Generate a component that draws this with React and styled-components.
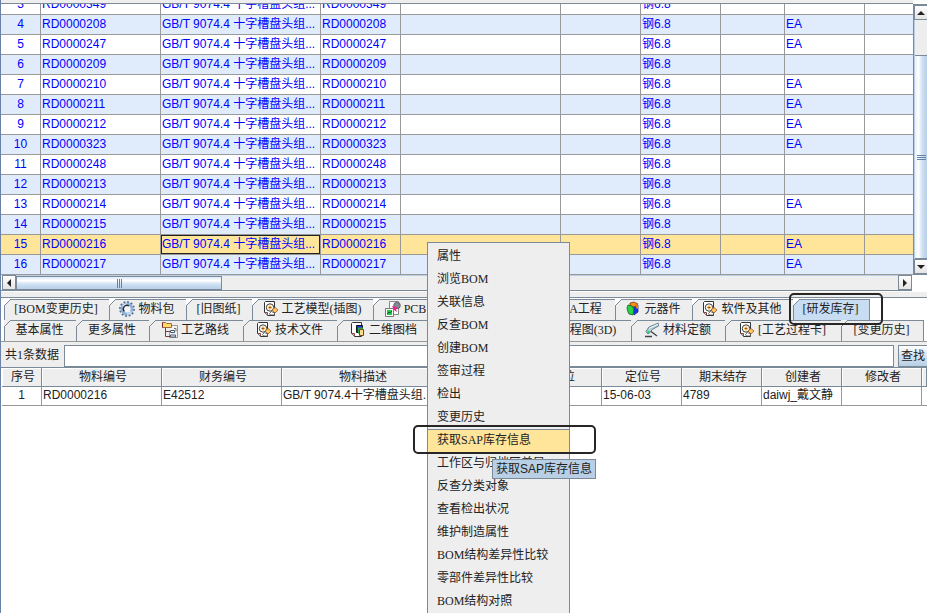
import React from "react";
import styled, { createGlobalStyle } from "styled-components";

const line = "#7a8a99";
const grid = "#999";
const panel = "#eee";
const sans = `"Liberation Sans", "Noto Sans CJK SC", sans-serif`;
const serif = `"Liberation Serif", "Noto Sans CJK SC", serif`;

const GlobalStyle = createGlobalStyle`
  * {
    box-sizing: border-box;
  }
  body {
    margin: 0;
    overflow: hidden;
    background: #fff;
    color: #222;
    font: 12px/18px ${serif};
  }
  button, input {
    margin: 0;
    font: inherit;
    color: inherit;
  }
`;

const Window = styled.main`
  position: relative;
  display: flex;
  flex-direction: column;
  min-height: 100vh;
  overflow: hidden;
  border-left: 1px solid #6b82a8;
`;

const TopPane = styled.section`
  display: flex;
  height: 275px;
`;

const TableArea = styled.div`
  flex: 1;
  display: flex;
  flex-direction: column;
  min-width: 0;
`;

const HeaderEdge = styled.div`
  flex: none;
  height: 4px;
  background: ${panel};
  border-bottom: 1px solid ${line};
`;

const Viewport = styled.div`
  flex: 1;
  display: flex;
  flex-direction: column;
  justify-content: flex-end;
  min-height: 0;
  overflow: hidden;
`;

const Table = styled.table`
  width: 100%;
  table-layout: fixed;
  border-collapse: separate;
  border-spacing: 0;
  font-family: ${sans};
`;

const Col = styled.col`
  width: ${props => (props.$w ? `${props.$w}px` : "auto")};
`;

const PartRow = styled.tr`
  height: 20px;
  color: #00f;
  background: ${props =>
    props.$selected ? "#ffe599" : props.$even ? "#e0ebfc" : "#fff"};
`;

const Cell = styled.td`
  padding: 0 1px 2px;
  line-height: 16px;
  overflow: hidden;
  white-space: nowrap;
  border-right: 1px solid ${grid};
  border-bottom: 1px solid ${grid};
  text-align: ${props => (props.$center ? "center" : "left")};
  box-shadow: ${props => (props.$focus ? "inset 0 0 0 1px #222" : "none")};
  &:last-child {
    border-right: 0;
  }
`;

const HeadCell = styled.th`
  height: 19px;
  padding: 0 0 0 3px;
  font-weight: normal;
  line-height: 16px;
  white-space: nowrap;
  background: ${panel};
  border-right: 1px solid ${line};
  border-bottom: 1px solid ${line};
  box-shadow: inset 1px 1px #fff;
`;

const VerticalBar = styled.div`
  flex: none;
  display: flex;
  flex-direction: column;
  width: 14px;
  margin-top: 4px;
  border: solid ${line};
  border-width: 1px 0 1px 1px;
`;

const ArrowButton = styled.button`
  flex: none;
  display: flex;
  align-items: center;
  justify-content: center;
  width: 14px;
  height: 15px;
  padding: 0;
  border: 1px solid ${line};
  background: linear-gradient(#fff, #e4e4e4);
`;

const VerticalTrack = styled.div`
  flex: 1;
  padding-top: 35px;
  background: ${panel};
  border-left: 1px solid #b8cfe5;
`;

const VerticalThumb = styled.div`
  display: flex;
  align-items: center;
  justify-content: center;
  height: 100%;
  border: solid ${line};
  border-width: 1px 0;
  background: linear-gradient(90deg, #e8f1fb, #fff 30%, #cfe0f3 60%, #b8cfe5);
`;

const HorizontalBar = styled.div`
  flex: none;
  display: flex;
  height: 16px;
  margin-right: 15px;
  padding-left: 1px;
  border-bottom: 1px solid ${line};
`;

const HorizontalTrack = styled.div`
  flex: 1;
  background: ${panel};
  border-top: 1px solid #b8cfe5;
`;

const HorizontalThumb = styled.div`
  display: flex;
  align-items: center;
  justify-content: center;
  width: 206px;
  height: 100%;
  border: 1px solid ${line};
  background: linear-gradient(#dbe9f8, #fff 30%, #cfe0f3 60%, #b8cfe5);
`;

const Divider = styled.div`
  flex: none;
  height: 6px;
  margin-top: 1px;
  background: ${panel};
  border-bottom: 1px solid ${line};
`;

const TabArea = styled.nav`
  flex: none;
  padding: 1px 3px 0;
  border-bottom: 1px solid ${grid};
`;

const TabRow = styled.div`
  display: flex;
  height: 21px;
  background: ${props => (props.$inner ? panel : "#fff")};
`;

const TabButton = styled.button`
  position: relative;
  flex: none;
  display: flex;
  align-items: center;
  justify-content: center;
  gap: 3px;
  width: ${props => props.$w}px;
  padding: 0 2px 2px 0;
  white-space: nowrap;
  background: ${props => (props.$selected ? "#c8ddf2" : panel)};
  border: solid ${line};
  border-width: 1px 1px 0 0;
  &:first-child {
    border-left-width: 1px;
  }
  &::before {
    content: "";
    position: absolute;
    top: -1px;
    left: -1px;
    width: 7px;
    height: 7px;
    background: linear-gradient(
      to bottom right,
      ${props => (props.$inner ? panel : "#fff")} 43%,
      ${line} 43% 56%,
      ${props => (props.$selected ? "#c8ddf2" : panel)} 56%
    );
  }
`;

const SearchBar = styled.form`
  flex: none;
  display: flex;
  align-items: stretch;
  height: 25px;
  padding: 3px 0 0 4px;
  background: ${panel};
`;

const SearchLabel = styled.label`
  width: 59px;
  line-height: 20px;
`;

const SearchInput = styled.input`
  flex: 1;
  min-width: 0;
  padding: 0 4px;
  background: #fff;
  border: 1px solid ${line};
`;

const SearchButton = styled.button`
  width: 29px;
  margin-left: 4px;
  padding: 0 0 0 2px;
  text-align: left;
  white-space: nowrap;
  border: solid ${line};
  border-width: 1px 0 1px 1px;
  background: linear-gradient(#fff, #dde8f3 40%, #b8cfe5);
`;

const Results = styled.section`
  flex: 1;
  padding-left: 1px;
  border-top: 1px solid ${line};
`;

const ResultRow = styled.tr`
  height: 19px;
`;

const Menu = styled.div`
  position: absolute;
  top: 242px;
  left: 426px;
  display: flex;
  flex-direction: column;
  width: 143px;
  padding: 2px 0;
  background: ${panel};
  border: 1px solid ${line};
`;

const MenuItem = styled.button`
  flex: none;
  height: 23px;
  padding: 0 0 2px 9px;
  text-align: left;
  white-space: nowrap;
  border: solid transparent;
  border-width: 1px 0;
  border-top-color: ${props => (props.$active ? line : "transparent")};
  background: ${props => (props.$active ? "#ffe599" : "transparent")};
`;

const Tooltip = styled.div`
  position: absolute;
  top: 459px;
  left: 491px;
  padding: 0 3px;
  background: #b8cfe5;
  border: 1px solid ${line};
  font-family: ${sans};
`;

const Outline = styled.div`
  position: absolute;
  top: ${props => props.$top}px;
  left: ${props => props.$left}px;
  width: ${props => props.$w}px;
  height: ${props => props.$h}px;
  border: 2px solid #262626;
  border-radius: 5px;
  pointer-events: none;
`;

const Svg = props => (
  <svg width="16" height="16" viewBox="0 0 16 16" aria-hidden="true" {...props} />
);

const GearIcon = () => (
  <Svg fill="none">
    <circle cx="8" cy="8" r="6.7" stroke="#54708f" strokeWidth="2.4" strokeDasharray="1.8 1.7" />
    <circle cx="8" cy="8" r="5" stroke="#8fb1d6" strokeWidth="3" />
    <path d="M3.6 5.500A5 5 0 0 1 8 3" stroke="#d5e6f8" strokeWidth="1.600" />
    <path d="M12.400 10.500A5 5 0 0 1 8 13" stroke="#c9def5" strokeWidth="1.600" />
    <circle cx="8" cy="8" r="3.4" fill="#f4f4f4" />
    <path d="M5.400 10.500A3.600 3.600 0 0 1 10 5" stroke="#222c38" strokeWidth="1.300" />
  </Svg>
);

const RouteIcon = () => (
  <Svg fill="none">
    <path d="M8.500 3.500h7v12h-8v-5" fill="#f2f2f2" stroke="#9a9a9a" />
    <path d="M3.500 6v8.500H8M3.500 9.500H8" stroke="#7d3b3b" />
    <path d="M8.500 8.500h4v2h-4zM8.500 13h5v2h-5z" fill="#fff" stroke="#43586e" />
    <path d="M12 6.500h2v3" stroke="#777" />
    <path d="M.5 5.500v-5h3l1 1h5v4z" fill="#ffdc6c" stroke="#a56a34" />
    <path d="M.5 5.500v-5" stroke="#6e2222" />
  </Svg>
);

const DocIcon = () => (
  <Svg fill="none">
    <path d="M2.500 .5h9v14h-7l-3-3v-10z" fill="#fff" stroke="#333" />
    <path d="M1.500 11.500h3v3" fill="#c9c9c9" stroke="#8a4444" />
    <circle cx="7" cy="6.500" r="3.700" fill="#fff" stroke="#3a3a3a" />
    <path d="M7 4.500v4M5 6.500h4" stroke="#f09a1a" strokeWidth="1.400" />
    <path d="M6.500 6h1v1h-1z" fill="#222" />
    <path d="M9 9l3-2.500 3 2.500-3 3z" fill="#ffc861" stroke="#a0561c" strokeWidth=".8" />
    <path d="M6.500 12.500l2-2 3 1.500v2h-4z" fill="#fff" stroke="#444" strokeWidth=".8" />
  </Svg>
);

const PcbIcon = () => (
  <Svg fill="none">
    <path d="M4.500 .5h9v13h-9z" fill="#fff" stroke="#888" />
    <circle cx="12" cy="4.500" r="3.300" fill="#858b95" stroke="#4c5360" strokeWidth=".8" />
    <path d="M7 5l6 1.500-2 1.500 1 3-3-2z" fill="#ee1f86" />
    <path d="M.5 7.500h8v8h-8z" fill="#fff" stroke="#777" />
    <path d="M2 9h5v5H2z" fill="#1fcb3c" />
    <path d="M2 13l2-2 1 1 2-2" stroke="#064" />
  </Svg>
);

const DrawingIcon = () => (
  <Svg fill="none">
    <path d="M2.500 .5h9v14h-7l-3-3v-10z" fill="#fff" stroke="#333" />
    <path d="M1.500 11.500h3v3" fill="#c9c9c9" stroke="#8a4444" />
    <path d="M6.500 3.500h6v7h-6z" fill="#1d2fe6" stroke="#112" />
    <path d="M8 5.500h5v6H8z" fill="#2fa648" />
    <path d="M9.500 7.500h4v6h-4z" fill="#ffdc8a" stroke="#6b4a20" />
  </Svg>
);

const CubeIcon = () => (
  <Svg>
    <path d="M5 2l4-1 4 2-4 3-4-1z" fill="#ff8b12" stroke="#603010" strokeWidth=".7" />
    <path d="M8 7l5-3v7l-4 3z" fill="#1532e8" stroke="#142060" strokeWidth=".7" />
    <path d="M3 4l4 1 2 3-1 6-4-1-1-2-1-4z" fill="#27d443" stroke="#135c20" strokeWidth=".8" />
    <path d="M10 3l3 1v4l-2-1z" fill="#f47a11" />
  </Svg>
);

const ArmIcon = () => (
  <Svg fill="none">
    <path d="M14.500 1L5 5 2 9.500l2 2.500 3-2.500 1-2L14.500 4z" fill="#b8d0dd" stroke="#667d8c" />
    <path d="M5.500 6l9-4" stroke="#f2f8fc" />
    <path d="M1 14.500h7M7 9.500l6 4.500" stroke="#39454d" strokeWidth="1.400" />
    <circle cx="4.500" cy="10" r="1.300" fill="#2fcf54" />
  </Svg>
);

const Arrow = ({ d }) => (
  <svg width="8" height="8" viewBox="0 0 8 8" aria-hidden="true">
    <path d={d} fill="#222" />
  </svg>
);

const Grip = ({ vertical }) => (
  <svg
    width={vertical ? 9 : 7}
    height={vertical ? 7 : 9}
    viewBox={vertical ? "0 0 9 7" : "0 0 7 9"}
    aria-hidden="true"
  >
    <path
      d={vertical ? "M0 1.500h9M0 3.500h9M0 5.500h9" : "M1.500 0v9M3.500 0v9M5.500 0v9"}
      stroke="#6382a8"
    />
  </svg>
);

const parts = [
  [3, "RD0000349", ""],
  [4, "RD0000208", "EA"],
  [5, "RD0000247", "EA"],
  [6, "RD0000209", ""],
  [7, "RD0000210", "EA"],
  [8, "RD0000211", "EA"],
  [9, "RD0000212", "EA"],
  [10, "RD0000323", "EA"],
  [11, "RD0000248", ""],
  [12, "RD0000213", ""],
  [13, "RD0000214", "EA"],
  [14, "RD0000215", ""],
  [15, "RD0000216", "EA"],
  [16, "RD0000217", "EA"]
];

const outerTabs = [
  { label: "[BOM变更历史]", w: 106 },
  { label: "物料包", w: 77, icon: GearIcon },
  { label: "[旧图纸]", w: 66 },
  { label: "工艺模型(插图)", w: 121, icon: DocIcon },
  { label: "PCB", w: 66, icon: PcbIcon },
  { label: "", w: 83 },
  { label: "EDA工程", w: 93, icon: PcbIcon },
  { label: "元器件", w: 77, icon: CubeIcon },
  { label: "软件及其他", w: 101, icon: DocIcon },
  { label: "[研发库存]", w: 76, selected: true }
];

const innerTabs = [
  { label: "基本属性", w: 73 },
  { label: "更多属性", w: 73 },
  { label: "工艺路线", w: 94, icon: RouteIcon },
  { label: "技术文件", w: 94, icon: DocIcon },
  { label: "二维图档", w: 94, icon: DrawingIcon },
  { label: "", w: 70 },
  { label: "工艺过程图(3D)", w: 130, icon: DocIcon },
  { label: "材料定额", w: 94, icon: ArmIcon },
  { label: "[工艺过程卡]", w: 116, icon: DocIcon },
  { label: "[变更历史]", w: 82 }
];

const resultColumns = [
  ["序号", 40],
  ["物料编号", 120],
  ["财务编号", 120],
  ["物料描述", 160],
  ["", 80],
  ["单位", 80],
  ["定位号", 80],
  ["期末结存", 80],
  ["创建者", 80],
  ["修改者", 80],
  ["", 0]
];

const resultCells = [
  "1",
  "RD0000216",
  "E42512",
  "GB/T 9074.4十字槽盘头组...",
  "",
  "",
  "15-06-03",
  "4789",
  "daiwj_戴文静",
  "",
  ""
];

const menuItems = [
  "属性",
  "浏览BOM",
  "关联信息",
  "反查BOM",
  "创建BOM",
  "签审过程",
  "检出",
  "变更历史",
  "获取SAP库存信息",
  "工作区与归档区差异",
  "反查分类对象",
  "查看检出状况",
  "维护制造属性",
  "BOM结构差异性比较",
  "零部件差异性比较",
  "BOM结构对照"
];

const Tabs = ({ tabs, inner }) => (
  <TabRow $inner={inner}>
    {tabs.map(({ label, w, icon: Icon, selected }) => (
      <TabButton key={label} type="button" $w={w} $inner={inner} $selected={selected}>
        {Icon && <Icon />}
        {label}
      </TabButton>
    ))}
  </TabRow>
);

const PartsTable = () => (
  <Table>
    <colgroup>
      {[40, 120, 160, 80, 160, 80, 80, 64, 80, 0].map((w, i) => (
        <Col key={i} $w={w} />
      ))}
    </colgroup>
    <tbody>
      {parts.map(([no, code, unit]) => (
        <PartRow key={no} $even={no % 2 === 0} $selected={no === 15}>
          <Cell $center>{no}</Cell>
          <Cell>{code}</Cell>
          <Cell $focus={no === 15}>GB/T 9074.4 十字槽盘头组...</Cell>
          <Cell>{code}</Cell>
          <Cell />
          <Cell />
          <Cell>钢6.8</Cell>
          <Cell />
          <Cell>{unit}</Cell>
          <Cell />
        </PartRow>
      ))}
    </tbody>
  </Table>
);

const ResultsTable = () => (
  <Table>
    <colgroup>
      {resultColumns.map(([, w], i) => (
        <Col key={i} $w={w} />
      ))}
    </colgroup>
    <thead>
      <tr>
        {resultColumns.map(([name], i) => (
          <HeadCell key={i}>{name}</HeadCell>
        ))}
      </tr>
    </thead>
    <tbody>
      <ResultRow>
        {resultCells.map((value, i) => (
          <Cell key={i} $center={i === 0}>
            {value}
          </Cell>
        ))}
      </ResultRow>
    </tbody>
  </Table>
);

const App = () => {
  return (
    <>
      <GlobalStyle />
      <Window>
        <TopPane>
          <TableArea>
            <HeaderEdge />
            <Viewport>
              <PartsTable />
            </Viewport>
          </TableArea>
          <VerticalBar>
            <ArrowButton type="button" aria-label="Scroll up">
              <Arrow d="M0 6l4-4 4 4z" />
            </ArrowButton>
            <VerticalTrack>
              <VerticalThumb>
                <Grip vertical />
              </VerticalThumb>
            </VerticalTrack>
            <ArrowButton type="button" aria-label="Scroll down">
              <Arrow d="M0 2l4 4 4-4z" />
            </ArrowButton>
          </VerticalBar>
        </TopPane>
        <HorizontalBar>
          <ArrowButton type="button" aria-label="Scroll left">
            <Arrow d="M6 0L2 4l4 4z" />
          </ArrowButton>
          <HorizontalTrack>
            <HorizontalThumb>
              <Grip />
            </HorizontalThumb>
          </HorizontalTrack>
          <ArrowButton type="button" aria-label="Scroll right">
            <Arrow d="M2 0l4 4-4 4z" />
          </ArrowButton>
        </HorizontalBar>
        <Divider />
        <TabArea>
          <Tabs tabs={outerTabs} />
          <Tabs tabs={innerTabs} inner />
        </TabArea>
        <SearchBar>
          <SearchLabel htmlFor="search">共1条数据</SearchLabel>
          <SearchInput id="search" type="text" />
          <SearchButton type="button">查找</SearchButton>
        </SearchBar>
        <Results>
          <ResultsTable />
        </Results>
        <Menu role="menu">
          {menuItems.map(item => (
            <MenuItem
              key={item}
              type="button"
              role="menuitem"
              $active={item === "获取SAP库存信息"}
            >
              {item}
            </MenuItem>
          ))}
        </Menu>
        <Tooltip role="tooltip">获取SAP库存信息</Tooltip>
        <Outline $top={425} $left={412} $w={183} $h={29} />
        <Outline $top={293} $left={788} $w={94} $h={32} />
      </Window>
    </>
  );
};

export default App;
